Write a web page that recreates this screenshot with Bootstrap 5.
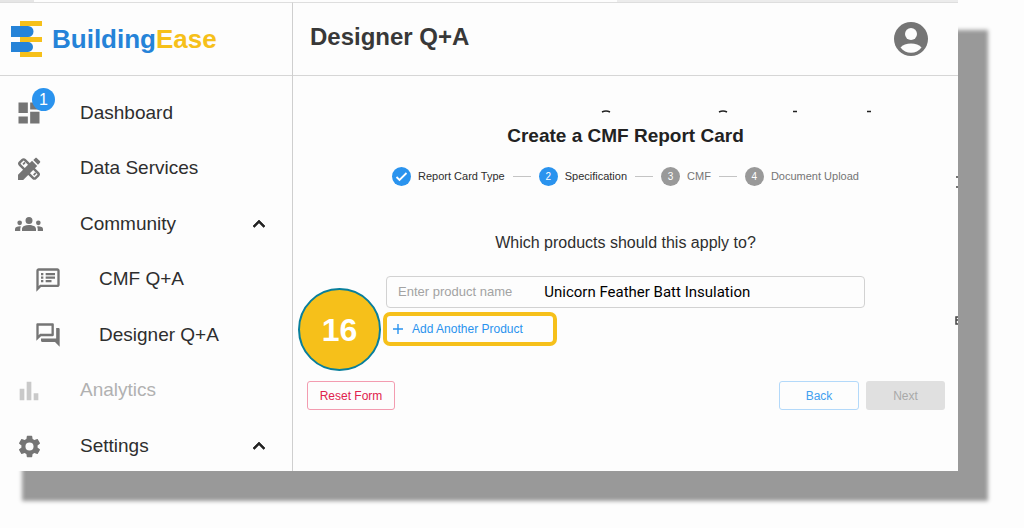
<!DOCTYPE html>
<html lang="en">
<head>
<meta charset="utf-8">
<meta name="viewport" content="width=device-width, initial-scale=1">
<title>BuildingEase – Designer Q+A</title>
<link href="https://cdn.jsdelivr.net/npm/bootstrap@5.3.0/dist/css/bootstrap.min.css" rel="stylesheet">
<script defer src="https://cdn.jsdelivr.net/npm/bootstrap@5.3.0/dist/js/bootstrap.bundle.min.js"></script>
<style>
  :root { --line: #d6d6d6; --blue: #2a93ee; --gold: #f6c01a; --ink: #2e2e2e; --icon: #757575; }
  body { background: #fdfdfd; color: var(--ink); font-family: "Liberation Sans", Arial, sans-serif; }
  .app-window { min-height: calc(100vh - 57px); margin: 0 66px 57px -8px; padding-left: 8px; background: #fdfdfd; box-shadow: 30px 30px 4px #999; }
  .top-strip { top: 0; left: 8px; right: 0; height: 2px; background: linear-gradient(90deg, #e6e6e6 34px, transparent 34px calc(100% - 341px), #ececec calc(100% - 341px)); }
  .side { width: 293px; border-right: 1px solid #cfcfcf; margin-top: 2px; border-top: 1px solid #dedede; }
  .content { border-top: 1px solid #dedede; margin-top: 2px; }
  .bar { height: 73px; border-bottom: 1px solid var(--line); }
  .brand { font-size: 26px; line-height: 32px; font-weight: 700; color: #2583d8; text-decoration: none; }
  .brand b { color: var(--gold); }
  .menu { padding: 13px 0 1px; }
  .menu a { height: 48px; color: var(--ink); font-size: 19px; text-decoration: none; }
  .menu svg { fill: var(--icon); }
  .menu .ico { width: 58px; margin-right: 22px; }
  .menu .sub .ico { width: 95px; margin-right: 4px; }
  .menu .chev { fill: #222; margin-right: 21px; }
  .menu .off { color: #b1b1b1; }
  .menu .off svg { fill: #c9c9c9; }
  .count { left: 32px; top: -11px; width: 23px; height: 23px; font-size: 16px; line-height: 23px; background: var(--blue); color: #fff; border-radius: 50%; }
  .page-title { font-size: 24px; padding: 0 0 4px 17px; color: #383838; }
  .cut-line { margin-top: 34px; }
  .form-title { font-size: 19px; line-height: 24px; margin-top: 11px; color: #222; }
  .steps { font-size: 11px; margin-top: 19px; }
  .steps .dot { width: 19px; height: 19px; border-radius: 50%; background: #999; color: #fff; font-size: 10px; margin-right: 7px; }
  .steps .done { background: var(--blue); }
  .steps .todo { color: #757575; }
  .steps .dash { width: 18px; height: 1px; background: #c4c4c4; }
  .ask { font-size: 16px; line-height: 24px; margin-top: 45px; }
  .product { width: 72%; }
  .field { height: 32px; margin-top: 21px; border: 1px solid #d2d2d2; border-radius: 4px; padding-left: 11px; }
  .field label { font-size: 13px; color: #a3a3a3; }
  .field input { font: 400 15px/20px Roboto, sans-serif; color: #000; background: none; margin-left: 32px; outline: 0; min-width: 0; }
  .callout { margin: 4px 0 0 -3px; width: 174px; height: 34px; border: 4px solid var(--gold); border-radius: 7px; }
  .act { font-size: 12px; line-height: 18px; border-radius: 3px; height: 29px; }
  .add { color: var(--blue); padding: 0 5px; border: 0; }
  .badge-16 { left: -88px; top: 12px; width: 83px; height: 83px; border: 2px solid #087f9c; border-radius: 50%; background: var(--gold); color: #fff; font-size: 32px; font-weight: 700; }
  .foot { margin: 35px 13px 0 14px; }
  .reset, .reset:hover { color: #e0224e; border: 1px solid #f39cb0; width: 88px; }
  .back, .back:hover { color: #42a0f0; border: 1px solid #b3d9fa; width: 80px; margin-right: 7px; }
  .next, .next:disabled { color: #a9a9a9; background: #e0e0e0; border: 0; width: 79px; opacity: 1; }
  .edge { right: 0; top: 174px; }
</style>
</head>
<body>
<div class="app-window d-flex position-relative">
  <div class="top-strip position-absolute"></div>
  <aside class="side d-flex flex-column flex-shrink-0">
    <div class="bar flex-shrink-0 d-flex align-items-center">
      <a class="brand d-flex align-items-center" href="#">
        <svg class="ms-2 me-2" width="36" height="36" viewBox="0 0 36 36" aria-hidden="true"><path fill="#f6c01a" d="M12 0h22v5H12zM12 16h22v5H12zM12 31h22v5H12z"/><path fill="#2583d8" d="M3 5h17a5 5 0 0 1 0 11H3zM3 21h17a5 5 0 0 1 0 10H3z"/></svg>
        <span>Building<b>Ease</b></span>
      </a>
    </div>
    <nav class="menu flex-grow-1 d-flex flex-column justify-content-between">
      <a href="#" class="d-flex align-items-center"><span class="ico position-relative d-flex justify-content-center"><svg width="28" height="28" viewBox="0 0 24 24"><path d="M3 3h8v9H3zM3 15h8v6H3zM13 3h8v6h-8zM13 11h8v10h-8z"/></svg><span class="count position-absolute text-center">1</span></span>Dashboard</a>
      <a href="#" class="d-flex align-items-center"><span class="ico d-flex justify-content-center"><svg width="28" height="28" viewBox="0 0 24 24"><g fill="none" stroke="#757575" stroke-width="2.100"><rect x="-9.500" y="-3" width="19" height="6" rx="1.400" transform="translate(12 12) rotate(45)"/><path d="m8.600 6.300-1.700 1.700M17.800 15.400l-1.800 1.800" stroke-width="1.500"/></g><path d="m2.600 17 12-12 4.400 4.400-12 12H2.600zM15.700 4.300l1.600-1.600c.5-.5 1-.5 1.500 0l2.500 2.500c.5.500.5 1 0 1.500l-1.600 1.600z"/></svg></span>Data Services</a>
      <a href="#" class="d-flex align-items-center"><span class="ico d-flex justify-content-center"><svg width="28" height="28" viewBox="0 0 24 24"><path d="M12 12.75c1.63 0 3.07.39 4.24.9 1.08.48 1.76 1.56 1.76 2.73V18H6v-1.61c0-1.18.68-2.26 1.76-2.73 1.17-.52 2.61-.91 4.24-.91zM4 13a2 2 0 1 0 0-4 2 2 0 0 0 0 4zm1.13 1.1A6.95 6.95 0 0 0 4 14c-.99 0-1.93.21-2.78.58A2.01 2.01 0 0 0 0 16.43V18h4.5v-1.61c0-.83.23-1.61.63-2.29zM20 13a2 2 0 1 0 0-4 2 2 0 0 0 0 4zm4 3.43c0-.81-.48-1.53-1.22-1.85a6.95 6.95 0 0 0-3.91-.48c.4.68.63 1.46.63 2.29V18H24v-1.57zM12 6a3 3 0 1 1 0 6 3 3 0 0 1 0-6z"/></svg></span>Community<svg class="chev ms-auto" width="24" height="24" viewBox="0 0 24 24"><path d="m12 8-6 6 1.41 1.41L12 10.83l4.59 4.58L18 14z" stroke="#222" stroke-width=".7"/></svg></a>
      <a href="#" class="sub d-flex align-items-center"><span class="ico d-flex justify-content-center"><svg width="28" height="28" viewBox="0 0 24 24"><path d="M20 2H4c-1.100 0-2 .9-2 2v18l4-4h14c1.100 0 2-.9 2-2V4c0-1.100-.9-2-2-2zm0 14H5.170L4 17.170V4h16v12zM6 12h2v2H6zm0-3h2v2H6zm0-3h2v2H6zm4 6h5v2h-5zm0-3h8v2h-8zm0-3h8v2h-8z"/></svg></span>CMF Q+A</a>
      <a href="#" class="sub d-flex align-items-center"><span class="ico d-flex justify-content-center"><svg width="28" height="28" viewBox="0 0 24 24"><path d="M15 4v7H5.170L4 12.170V4h11m1-2H3c-.55 0-1 .45-1 1v14l4-4h10c.55 0 1-.45 1-1V3c0-.55-.45-1-1-1zm5 4h-2v9H6v2c0 .55.45 1 1 1h11l4 4V7c0-.55-.45-1-1-1z"/></svg></span>Designer Q+A</a>
      <a href="#" class="off d-flex align-items-center"><span class="ico d-flex justify-content-center"><svg width="28" height="28" viewBox="0 0 24 24"><path d="M4 10h4v10H4zM10 4h4v16h-4zM16 14h4v6h-4z"/></svg></span>Analytics</a>
      <a href="#" class="d-flex align-items-center"><span class="ico d-flex justify-content-center"><svg width="27" height="27" viewBox="0 0 24 24"><path d="M19.14 12.94c.04-.3.06-.61.06-.94s-.02-.64-.07-.94l2.030-1.580c.18-.14.23-.41.12-.61l-1.920-3.320c-.12-.22-.37-.29-.59-.22l-2.390.96c-.5-.38-1.030-.7-1.620-.94l-.36-2.540a.48.48 0 0 0-.48-.41h-3.840c-.24 0-.43.17-.47.41l-.36 2.540c-.59.24-1.130.57-1.620.94l-2.390-.96c-.22-.08-.47 0-.59.22L2.740 8.870c-.12.21-.08.47.12.61l2.030 1.580c-.05.3-.09.63-.09.94s.02.64.07.94l-2.030 1.580c-.18.14-.23.41-.12.61l1.920 3.320c.12.22.37.29.59.22l2.390-.96c.5.38 1.030.7 1.620.94l.36 2.540c.05.24.24.41.48.41h3.840c.24 0 .44-.17.47-.41l.36-2.540c.59-.24 1.130-.56 1.620-.94l2.390.96c.22.08.47 0 .59-.22l1.920-3.320c.12-.22.07-.47-.12-.61l-2.010-1.580zM12 15.600a3.600 3.600 0 1 1 0-7.200 3.600 3.600 0 0 1 0 7.200z"/></svg></span>Settings<svg class="chev ms-auto" width="24" height="24" viewBox="0 0 24 24"><path d="m12 8-6 6 1.410 1.410L12 10.830l4.590 4.580L18 14z" stroke="#222" stroke-width=".7"/></svg></a>
    </nav>
  </aside>
  <main class="content flex-grow-1">
    <header class="bar d-flex align-items-center justify-content-between">
      <h1 class="page-title fw-bold mb-0">Designer Q+A</h1>
      <a href="#" class="me-4" aria-label="Account"><svg class="d-block" width="46" height="42" viewBox="0 0 46 42"><circle cx="23" cy="21" r="17" fill="#757575"/><circle cx="23" cy="16" r="6" fill="#fdfdfd"/><path d="M12.500 29.500c4-5.500 17-5.500 21 0-5 7-16 7-21 0z" fill="#fdfdfd"/></svg></a>
    </header>
    <div class="text-center">
      <svg class="cut-line d-block mx-auto" width="490" height="3" viewBox="0 0 490 3" fill="none" stroke="#222" stroke-width="1.500" aria-hidden="true"><path d="M221 2q4-2 8 0M338 2q4-2 8 0M412 1.500h4M486 1.500h4"/></svg>
      <h2 class="form-title fw-bold mb-0">Create a CMF Report Card</h2>
    </div>
    <div class="steps d-flex align-items-center justify-content-center gap-2">
      <span class="d-flex align-items-center"><span class="dot done d-flex align-items-center justify-content-center"><svg width="13" height="13" viewBox="0 0 13 13" fill="none" stroke="#fff" stroke-width="1.800"><path d="m1.500 7 3 3L11.500 3"/></svg></span>Report Card Type</span>
      <span class="dash"></span>
      <span class="d-flex align-items-center"><span class="dot done d-flex align-items-center justify-content-center">2</span>Specification</span>
      <span class="dash"></span>
      <span class="todo d-flex align-items-center"><span class="dot d-flex align-items-center justify-content-center">3</span>CMF</span>
      <span class="dash"></span>
      <span class="todo d-flex align-items-center"><span class="dot d-flex align-items-center justify-content-center">4</span>Document Upload</span>
    </div>
    <p class="ask text-center mb-0">Which products should this apply to?</p>
    <form>
      <div class="product mx-auto position-relative">
        <div class="field d-flex align-items-center">
          <label for="product">Enter product name</label>
          <input id="product" type="text" class="border-0 p-0 flex-grow-1" value="Unicorn Feather Batt Insulation">
        </div>
        <div class="callout d-flex align-items-center">
          <button type="button" class="btn act add d-flex align-items-center"><svg class="me-2" width="12" height="12" viewBox="0 0 12 12" stroke="#2a93ee" stroke-width="1.400"><path d="M6 1v10M1 6h10"/></svg>Add Another Product</button>
        </div>
        <span class="badge-16 position-absolute d-flex align-items-center justify-content-center">16</span>
      </div>
      <div class="foot d-flex">
        <button type="reset" class="btn act reset p-0 me-auto">Reset Form</button>
        <button type="button" class="btn act back p-0">Back</button>
        <button type="button" class="btn act next p-0" disabled>Next</button>
      </div>
    </form>
  </main>
  <svg class="edge position-absolute" width="3" height="152" viewBox="0 0 3 152" fill="none" stroke="#444" stroke-width="1.500" aria-hidden="true"><path d="M1 3h2M1 13h2M3 143H1v7h2M1 146h2"/></svg>
</div>
</body>
</html>
